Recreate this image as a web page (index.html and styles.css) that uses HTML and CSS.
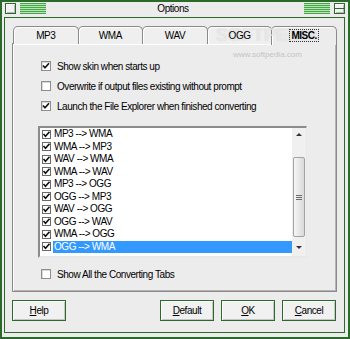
FILE: index.html
```html
<!DOCTYPE html>
<html>
<head>
<meta charset="utf-8">
<link rel="stylesheet" href="styles.css">
</head>
<body>
<div class="window">
  <div class="titlebar">
    <span class="tbox"></span>
    <span class="stripes"></span>
    <span class="title">Options</span>
    <span class="stripes"></span>
    <span class="tbox split"></span>
  </div>
  <div class="client">
    <div class="tabs">
      <div class="tab"><span class="tl">MP3</span></div>
      <div class="tab"><span class="tl">WMA</span></div>
      <div class="tab"><span class="tl">WAV</span></div>
      <div class="tab"><span class="tl">OGG</span></div>
      <div class="tab active"><span class="tl focus">MISC.</span></div>
    </div>
    <div class="panel">
      <div class="opt"><span class="cb on"><svg viewBox="0 0 10 10"><path d="M2 4.5 L4 6.8 L8 2.2" /></svg></span>Show skin when starts up</div>
      <div class="opt"><span class="cb"></span>Overwrite if output files existing without prompt</div>
      <div class="opt"><span class="cb on"><svg viewBox="0 0 10 10"><path d="M2 4.5 L4 6.8 L8 2.2" /></svg></span>Launch the File Explorer when finished converting</div>
      <div class="listbox">
        <ul class="items">
          <li><span class="cb sm"><svg viewBox="0 0 9 9"><path d="M1.5 4 L3.5 6.3 L7.5 1.8" /></svg></span><span class="lbl">MP3 --&gt; WMA</span></li>
          <li><span class="cb sm"><svg viewBox="0 0 9 9"><path d="M1.5 4 L3.5 6.3 L7.5 1.8" /></svg></span><span class="lbl">WMA --&gt; MP3</span></li>
          <li><span class="cb sm"><svg viewBox="0 0 9 9"><path d="M1.5 4 L3.5 6.3 L7.5 1.8" /></svg></span><span class="lbl">WAV --&gt; WMA</span></li>
          <li><span class="cb sm"><svg viewBox="0 0 9 9"><path d="M1.5 4 L3.5 6.3 L7.5 1.8" /></svg></span><span class="lbl">WMA --&gt; WAV</span></li>
          <li><span class="cb sm"><svg viewBox="0 0 9 9"><path d="M1.5 4 L3.5 6.3 L7.5 1.8" /></svg></span><span class="lbl">MP3 --&gt; OGG</span></li>
          <li><span class="cb sm"><svg viewBox="0 0 9 9"><path d="M1.5 4 L3.5 6.3 L7.5 1.8" /></svg></span><span class="lbl">OGG --&gt; MP3</span></li>
          <li><span class="cb sm"><svg viewBox="0 0 9 9"><path d="M1.5 4 L3.5 6.3 L7.5 1.8" /></svg></span><span class="lbl">WAV --&gt; OGG</span></li>
          <li><span class="cb sm"><svg viewBox="0 0 9 9"><path d="M1.5 4 L3.5 6.3 L7.5 1.8" /></svg></span><span class="lbl">OGG --&gt; WAV</span></li>
          <li><span class="cb sm"><svg viewBox="0 0 9 9"><path d="M1.5 4 L3.5 6.3 L7.5 1.8" /></svg></span><span class="lbl">WMA --&gt; OGG</span></li>
          <li class="sel"><span class="cb sm"><svg viewBox="0 0 9 9"><path d="M1.5 4 L3.5 6.3 L7.5 1.8" /></svg></span><span class="lbl">OGG --&gt; WMA</span></li>
        </ul>
        <div class="scrollbar">
          <span class="arrow up"></span>
          <span class="thumb"><span class="grip"></span></span>
          <span class="arrow down"></span>
        </div>
      </div>
      <div class="opt last"><span class="cb"></span>Show All the Converting Tabs</div>
    </div>
    <div class="buttons">
      <button class="btn"><u>H</u>elp</button>
      <button class="btn push"><u>D</u>efault</button>
      <button class="btn"><u>O</u>K</button>
      <button class="btn"><u>C</u>ancel</button>
    </div>
  </div>
  <div class="wm-big">SOFTPEDIA</div>
  <div class="wm-small">www.softpedia.com</div>
</div>
</body>
</html>
```
FILE: styles.css
```css
* { box-sizing: border-box; }
html, body { margin: 0; padding: 0; }
body {
  width: 350px;
  height: 339px;
  overflow: hidden;
  font-family: "Liberation Sans", Arial, sans-serif;
  font-size: 10px;
  letter-spacing: -0.45px;
  color: #000;
  background: #ececec;
}
.window {
  position: relative;
  width: 350px;
  height: 339px;
  border: 2px solid #2c6a2c;
  background: #ececec;
  padding: 0 3px 4px 2px;
  display: flex;
  flex-direction: column;
}
.titlebar {
  height: 15px;
  display: flex;
  align-items: flex-start;
  padding-top: 1px;
}
.tbox {
  position: relative;
  width: 11px;
  height: 11px;
  margin-left: 1px;
  border: 1px solid #2c6a2c;
  background: #f2f2f2;
  box-shadow: inset 1px 1px 0 #fff, inset -1px -1px 0 #b8b8b8;
}
.tbox.split { margin-left: 4px; }
.tbox.split::after {
  content: "";
  position: absolute;
  left: 0; right: 0; top: 4px;
  height: 1px;
  background: #2c6a2c;
}
.stripes {
  width: 26px;
  height: 11px;
  margin-left: 4px;
  background: repeating-linear-gradient(to bottom, #47a847 0 1px, #b6e4b6 1px 2px);
}
.title {
  flex: 1;
  text-align: center;
  line-height: 14px;
  margin-top: -1px;
}
.client {
  flex: 1;
  border: 1px solid #2c6a2c;
  padding: 8px 7px 0 7px;
  display: flex;
  flex-direction: column;
}
.tabs {
  display: flex;
  height: 18px;
  padding-left: 1px;
  position: relative;
}
.tab {
  position: relative;
  flex: 1;
  height: 18px;
  margin-left: -1px;
  border: 1px solid #8a8a8a;
  border-bottom: none;
  border-radius: 5px 5px 0 0;
  background: #efefef;
  box-shadow: inset 1px 1px 0 #fff;
  text-align: center;
  line-height: 17px;
}
.tab:first-child { margin-left: 0; }
.tab.active {
  height: 19px;
  font-weight: bold;
  background: #ececec;
}
.tl {
  position: relative;
  z-index: 3;
}
.focus {
  border: 1px dotted #333;
  padding: 0 1px;
}
.panel {
  height: 249px;
  margin-top: -1px;
  border: 1px solid #8a8a8a;
  box-shadow: inset 1px 1px 0 #fff, inset -1px -1px 0 #b4b4b4;
  padding: 15px 0 0 25px;
}
.opt {
  display: flex;
  align-items: center;
  height: 14px;
  gap: 6px;
  padding-left: 3px;
  margin-bottom: 6px;
}
.cb {
  position: relative;
  width: 10px;
  height: 10px;
  flex: none;
  background: #fff;
  border: 1px solid #8e8e8e;
  box-shadow: inset 1px 1px 0 #d8d8d8;
}
.cb svg {
  position: absolute;
  left: -1px; top: -1px;
  width: 10px; height: 10px;
}
.cb path {
  fill: none;
  stroke: #111;
  stroke-width: 1.6;
}
.cb.sm {
  width: 9px;
  height: 9px;
  border-color: #6a6a6a;
  box-shadow: none;
  margin-right: 2px;
}
.cb.sm svg { width: 9px; height: 9px; }
.listbox {
  display: flex;
  width: 269px;
  height: 132px;
  margin-top: 13px;
  border-style: solid;
  border-width: 2px 1px 2px 2px;
  border-color: #8c8c8c #e8e8e8 #e8e8e8 #8c8c8c;
  background: #fff;
}
.items {
  flex: 1;
  list-style: none;
  margin: 0;
  padding: 0 0 0 2px;
}
.items li {
  height: 12.5px;
  display: flex;
  align-items: center;
  white-space: nowrap;
}
.lbl {
  flex: 1;
  height: 12px;
  line-height: 12px;
  padding-left: 1px;
}
.sel .lbl {
  background: #3399ff;
  color: #fff;
}
.scrollbar {
  width: 14px;
  background: #f0f0f0;
  display: flex;
  flex-direction: column;
  align-items: center;
}
.arrow {
  width: 0; height: 0;
  border-left: 3px solid transparent;
  border-right: 3px solid transparent;
}
.arrow.up { margin-top: 5px; border-bottom: 3px solid #333; }
.arrow.down { margin-top: auto; margin-bottom: 7px; border-top: 3px solid #333; }
.thumb {
  width: 12px;
  height: 80px;
  margin-top: 21px;
  border: 1px solid #a2a2a2;
  border-radius: 2px;
  background: linear-gradient(to right, #f6f6f6, #d9d9d9);
  display: flex;
  align-items: center;
  justify-content: center;
}
.grip {
  width: 6px;
  height: 5px;
  background: repeating-linear-gradient(to bottom, #6c6c6c 0 1px, transparent 1px 2px);
}
.opt.last { margin-top: 9px; }
.buttons {
  display: flex;
  gap: 7px;
  margin-top: 8px;
  padding-right: 1px;
}
.btn {
  width: 54px;
  height: 21px;
  padding: 0;
  font-family: inherit;
  font-size: 10px;
  letter-spacing: -0.45px;
  color: #000;
  border: 1px solid #2c6a2c;
  background: #f1f1f1;
  box-shadow: inset 1px 1px 0 #fff, inset -1px -1px 0 #c6c6c6;
  border-radius: 0;
}
.btn.push { margin-left: auto; }
.wm-big {
  position: absolute;
  left: 214px;
  top: 23px;
  font-size: 18px;
  letter-spacing: 0;
  font-weight: bold;
  color: rgba(255, 255, 255, 0.6);
  text-shadow: 0 0 1px rgba(0, 0, 0, 0.18);
  z-index: 2;
  pointer-events: none;
}
.wm-small {
  position: absolute;
  left: 231px;
  top: 48px;
  font-size: 8px;
  letter-spacing: 0;
  color: #c4c4c4;
  z-index: 2;
}
```
